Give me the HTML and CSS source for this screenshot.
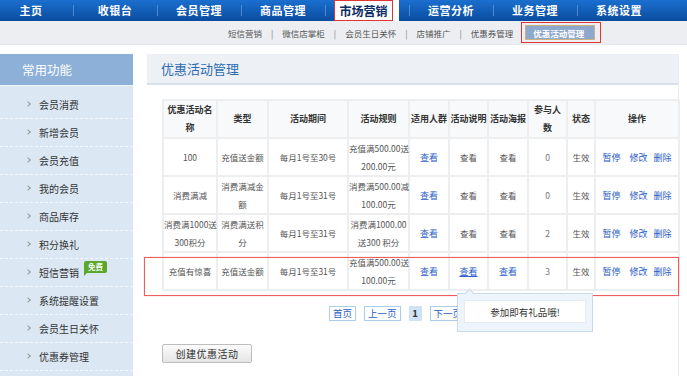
FILE: index.html
```html
<!DOCTYPE html>
<html lang="zh-CN">
<head>
    <meta charset="UTF-8">
    <meta name="viewport" content="width=device-width, initial-scale=1.0">
    <title>优惠活动管理</title>
    <link rel="stylesheet" href="styles.css">
</head>
<body>
    <div class="topnav">
        <a class="first">主页</a>
        <a>收银台</a>
        <a>会员管理</a>
        <a>商品管理</a>
        <a class="active"><span>市场营销</span></a>
        <a>运营分析</a>
        <a>业务管理</a>
        <a>系统设置</a>
    </div>
    <div class="subnav">
        <a>短信营销</a><i>|</i>
        <a>微信店掌柜</a><i>|</i>
        <a>会员生日关怀</a><i>|</i>
        <a>店铺推广</a><i>|</i>
        <a>优惠券管理</a>
        <a class="current"><span>优惠活动管理</span></a>
    </div>
    <div class="wrap">
        <div class="sidebar">
            <h3>常用功能</h3>
            <ul>
                <li>会员消费</li>
                <li>新增会员</li>
                <li>会员充值</li>
                <li>我的会员</li>
                <li>商品库存</li>
                <li>积分换礼</li>
                <li>短信营销<span class="badge">免费</span></li>
                <li>系统提醒设置</li>
                <li>会员生日关怀</li>
                <li>优惠券管理</li>
            </ul>
        </div>
        <div class="main">
            <h2>优惠活动管理</h2>
            <table>
                <colgroup>
                    <col style="width:54px"><col style="width:51px"><col style="width:80px"><col style="width:61px">
                    <col style="width:40px"><col style="width:39px"><col style="width:40px"><col style="width:39px">
                    <col style="width:28px"><col style="width:84px">
                </colgroup>
                <tr>
                    <th>优惠活动名<br>称</th>
                    <th>类型</th>
                    <th>活动期间</th>
                    <th>活动规则</th>
                    <th>适用人群</th>
                    <th>活动说明</th>
                    <th>活动海报</th>
                    <th>参与人<br>数</th>
                    <th>状态</th>
                    <th>操作</th>
                </tr>
                <tr>
                    <td>100</td>
                    <td>充值送金额</td>
                    <td>每月1号至30号</td>
                    <td>充值满500.00送<br>200.00元</td>
                    <td><a>查看</a></td>
                    <td>查看</td>
                    <td>查看</td>
                    <td class="num">0</td>
                    <td>生效</td>
                    <td class="ops"><a>暂停</a><a>修改</a><a>删除</a></td>
                </tr>
                <tr>
                    <td>消费满减</td>
                    <td>消费满减金<br>额</td>
                    <td>每月1号至31号</td>
                    <td>消费满500.00减<br>100.00元</td>
                    <td><a>查看</a></td>
                    <td>查看</td>
                    <td>查看</td>
                    <td class="num">0</td>
                    <td>生效</td>
                    <td class="ops"><a>暂停</a><a>修改</a><a>删除</a></td>
                </tr>
                <tr>
                    <td>消费满1000送<br>300积分</td>
                    <td>消费满送积<br>分</td>
                    <td>每月1号至31号</td>
                    <td>消费满1000.00<br>送300 积分</td>
                    <td><a>查看</a></td>
                    <td>查看</td>
                    <td>查看</td>
                    <td class="num">2</td>
                    <td>生效</td>
                    <td class="ops"><a>暂停</a><a>修改</a><a>删除</a></td>
                </tr>
                <tr>
                    <td>充值有惊喜</td>
                    <td>充值送金额</td>
                    <td>每月1号至31号</td>
                    <td>充值满500.00送<br>100.00元</td>
                    <td><a>查看</a></td>
                    <td><a class="hover">查看</a></td>
                    <td><a>查看</a></td>
                    <td class="num">3</td>
                    <td>生效</td>
                    <td class="ops"><a>暂停</a><a>修改</a><a>删除</a></td>
                </tr>
            </table>
            <div class="pager">
                <a>首页</a>
                <a>上一页</a>
                <span>1</span>
                <a>下一页</a>
            </div>
            <button class="create">创建优惠活动</button>
            <div class="mark"></div>
            <div class="tip"><div>参加即有礼品哦!</div></div>
        </div>
    </div>
</body>
</html>
```

FILE: styles.css
```css
body {
    margin: 0;
    padding: 0;
    width: 687px;
    height: 376px;
    overflow: hidden;
    background: #fff;
    font-family: "Noto Sans CJK SC", "Liberation Sans", sans-serif;
    color: #444;
}
a {
    cursor: pointer;
}

/* top menu */
.topnav {
    display: flex;
    height: 21px;
    background: linear-gradient(#1b6fcf, #0a4c9e);
}
.topnav a {
    position: relative;
    width: 84px;
    text-align: center;
    line-height: 21px;
    color: #fff;
    font-size: 11px;
    font-weight: bold;
    letter-spacing: 0.5px;
}
.topnav a::before {
    content: "";
    position: absolute;
    left: 0;
    top: 5px;
    height: 11px;
    border-left: 1px solid #4d8ad2;
}
.topnav a.first {
    width: 73px;
    padding-right: 11px;
    box-sizing: border-box;
}
.topnav a.first::before {
    display: none;
}
.topnav a.active span {
    display: block;
    width: 59px;
    height: 21px;
    margin-left: 9px;
    box-sizing: border-box;
    border: 1px solid #e23434;
    background: #fff;
    box-shadow: 6px 0 0 #fff;
    color: #0d2c63;
    font-size: 12px;
    line-height: 19px;
    letter-spacing: 0;
}

/* second menu */
.subnav {
    display: flex;
    align-items: center;
    height: 24px;
    padding-left: 228px;
    background: #eceef1;
    border-bottom: 1px solid #e3e6ea;
    box-sizing: border-box;
    font-size: 8.5px;
    color: #555;
}
.subnav i {
    font-style: normal;
    color: #777;
    margin: 0 9px;
}
.subnav a.current {
    margin-left: 8px;
    border: 1px solid #e23434;
    padding: 2px 5px 2px 3px;
}
.subnav a.current span {
    display: block;
    width: 70px;
    height: 15px;
    line-height: 15px;
    box-sizing: border-box;
    padding-left: 7px;
    background: #8ea8cd;
    border: 1px solid #c9b27d;
    color: #fff;
    font-weight: bold;
}

.wrap {
    display: flex;
    gap: 14px;
    margin-top: 9px;
    height: 322px;
}

/* left column */
.sidebar {
    width: 133px;
    background: #dbe8f4;
}
.sidebar h3 {
    margin: 0;
    height: 31px;
    line-height: 31px;
    padding-left: 22px;
    background: #8cb0d7;
    color: #fff;
    font-size: 12.5px;
    font-weight: normal;
}
.sidebar ul {
    list-style: none;
    margin: 0;
    padding: 5px 0 0 0;
    border-top: 1px solid #eef4fa;
}
.sidebar li {
    height: 27px;
    line-height: 27px;
    padding-left: 39px;
    border-bottom: 1px dashed #f4f8fc;
    font-size: 10px;
    color: #333;
    position: relative;
}
.sidebar li::before {
    content: "";
    position: absolute;
    left: 26px;
    top: 11px;
    width: 3px;
    height: 3px;
    border-top: 1px solid #999;
    border-right: 1px solid #999;
    transform: rotate(45deg);
}
.badge {
    display: inline-block;
    position: relative;
    top: -7px;
    margin-left: 5px;
    width: 23px;
    height: 12px;
    line-height: 12px;
    border-radius: 2px;
    background: #5aa72b;
    color: #fff;
    font-size: 7.5px;
    font-weight: bold;
    text-align: center;
}
.badge::after {
    content: "";
    position: absolute;
    left: 0;
    bottom: -3px;
    border-top: 4px solid #5aa72b;
    border-right: 4px solid transparent;
}

/* right column */
.main {
    position: relative;
    width: 531px;
    border-right: 1px solid #e8edf2;
}
.main h2 {
    margin: 0;
    height: 29px;
    line-height: 29px;
    padding-left: 14px;
    background: #edf1f5;
    border-bottom: 2px solid #d8e1ea;
    color: #2d6cb3;
    font-size: 13px;
    font-weight: normal;
}
table {
    margin: 14px 0 0 15px;
    width: 516px;
    table-layout: fixed;
    border-collapse: collapse;
}
th, td {
    border: 2px solid #eceef0;
    text-align: center;
    font-size: 9px;
    line-height: 18px;
    padding: 0;
    height: 35px;
    white-space: nowrap;
}
th {
    background: #f8f9fa;
    color: #333;
    font-weight: bold;
}
td {
    color: #555;
    font-size: 8.5px;
}
td a {
    color: #2a5ec8;
    font-size: 9px;
}
td a.hover {
    text-decoration: underline;
}
td.num {
    color: #777;
}
td.ops a {
    margin: 0 3px;
}
td.ops a:first-child {
    margin-right: 6px;
}

.pager {
    display: flex;
    gap: 8px;
    margin-top: 15px;
    padding-left: 182px;
    height: 15px;
    font-size: 9.5px;
}
.pager a {
    height: 15px;
    line-height: 13px;
    padding: 0 3px;
    box-sizing: border-box;
    border: 1px solid #a9cdea;
    color: #2a5ec8;
}
.pager span {
    width: 13px;
    line-height: 15px;
    text-align: center;
    background: #cfe3f5;
    color: #333;
    font-weight: bold;
}

.create {
    display: block;
    margin: 23px 0 0 15px;
    width: 90px;
    height: 19px;
    padding: 0;
    border: 1px solid #bdbdbd;
    border-radius: 2px;
    background: linear-gradient(#fbfbfb, #e5e5e5);
    font-family: inherit;
    font-size: 10px;
    letter-spacing: 0.5px;
    color: #333;
}

/* row highlight and hover tip */
.mark {
    position: absolute;
    left: -3px;
    top: 203px;
    width: 535px;
    height: 39px;
    box-sizing: border-box;
    border: 1px solid #ef5d5d;
    box-shadow: 0 0 1px #f6a0a0;
}
.tip {
    position: absolute;
    left: 310px;
    top: 239px;
    width: 136px;
    height: 39px;
    box-sizing: border-box;
    padding: 6px;
    background: #eef4fb;
    border: 1px solid #c8d9ea;
}
.tip::before {
    content: "";
    position: absolute;
    left: 8px;
    top: -4px;
    width: 6px;
    height: 6px;
    background: #eef4fb;
    border-left: 1px solid #c8d9ea;
    border-top: 1px solid #c8d9ea;
    transform: rotate(45deg);
}
.tip div {
    height: 23px;
    line-height: 23px;
    box-sizing: border-box;
    background: #fff;
    border: 1px solid #e3ebf3;
    text-align: center;
    font-size: 9.5px;
    color: #333;
}
```
